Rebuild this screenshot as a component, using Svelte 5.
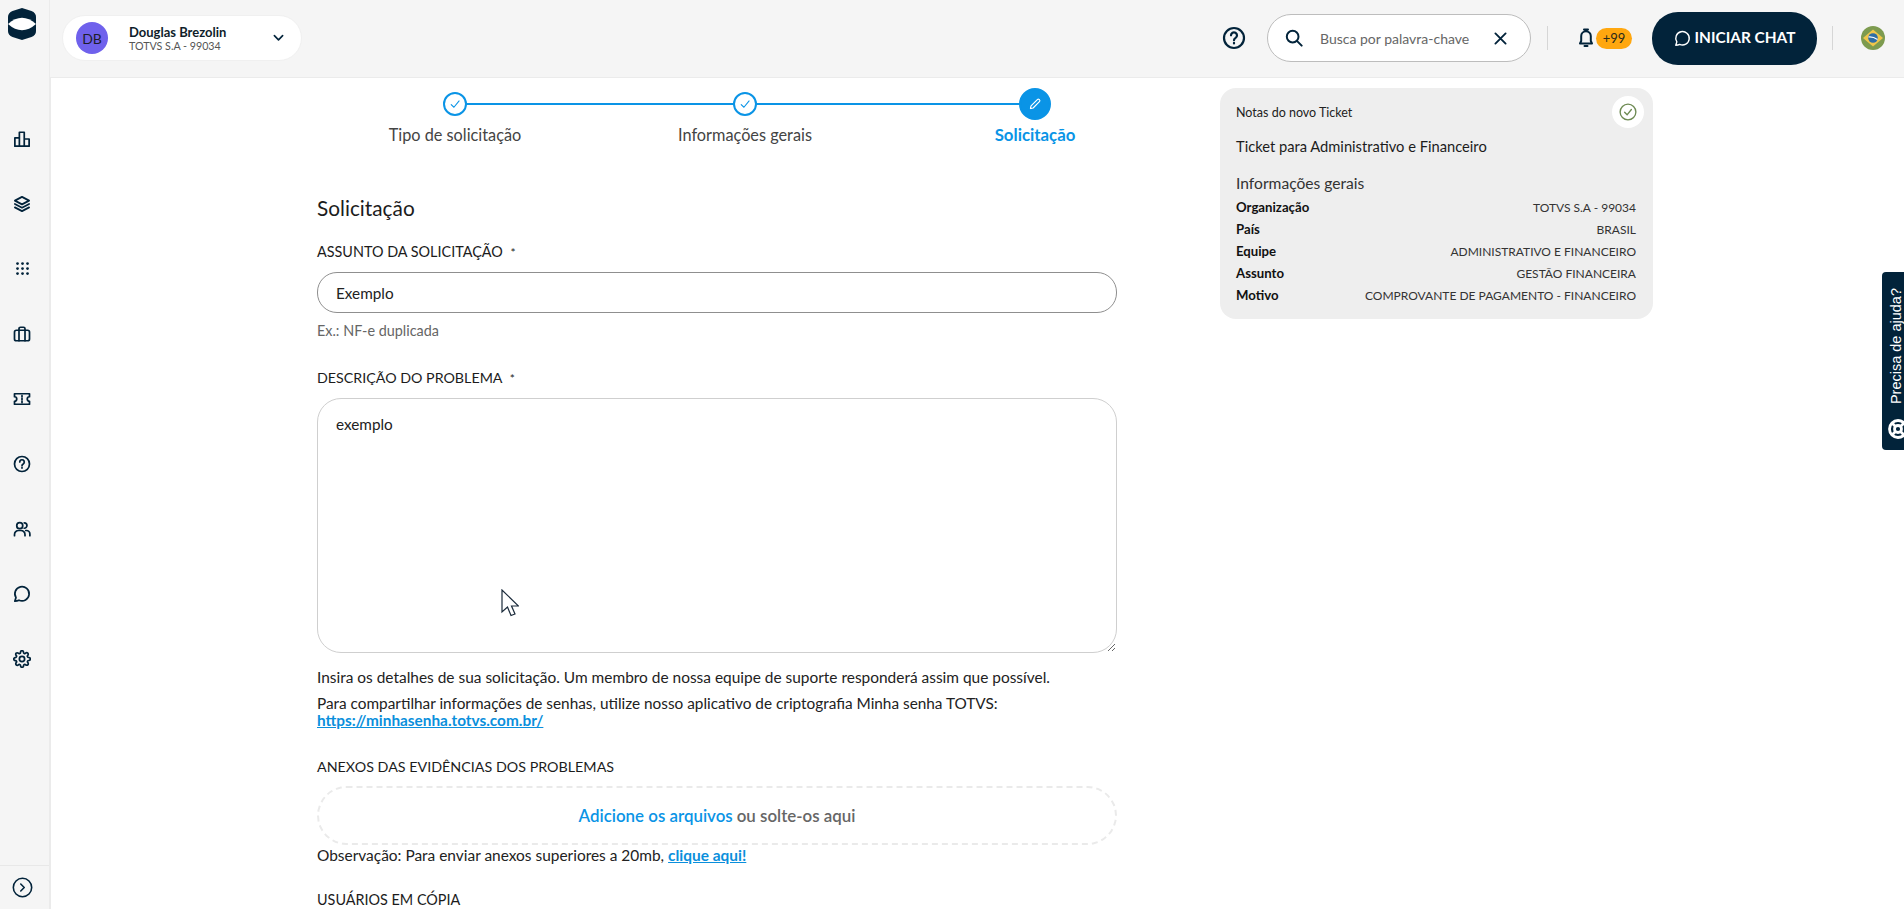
<script>
  const rows = [
    ['Organização', 'TOTVS S.A - 99034'],
    ['País', 'BRASIL'],
    ['Equipe', 'ADMINISTRATIVO E FINANCEIRO'],
    ['Assunto', 'GESTÃO FINANCEIRA'],
    ['Motivo', 'COMPROVANTE DE PAGAMENTO - FINANCEIRO']
  ];
</script>

<div class="shell">
  <aside class="side">
    <svg class="logo" viewBox="0 0 28 32"><path fill="#02233a" d="M14 0 23.5 3Q28 4.8 28 9V23Q28 27.2 23.5 29L14 32 4.500 29Q0 27.200 0 23V9Q0 4.800 4.500 3Z"/><path fill="#fff" d="M0 16Q14 3.500 28 16 14 28.500 0 16Z"/></svg>
    <nav class="nav">
      <div class="nav-item"><svg class="ico" viewBox="0 0 24 24"><path d="M2.500 21.500V10.500H8.500V21.500M8.500 21.500V3H15V21.500M15 21.500V12H21.500V21.500ZM2.500 21.500H21.500"/></svg></div>
      <div class="nav-item"><svg class="ico" viewBox="0 0 24 24"><path d="M12 2.500 21.500 7.500 12 12.500 2.500 7.500ZM2.500 12 12 17 21.500 12M2.500 16.500 12 21.500 21.500 16.500"/></svg></div>
      <div class="nav-item"><svg class="ico dots" viewBox="0 0 24 24"><circle cx="4" cy="4" r="2.200"/><circle cx="12" cy="4" r="2.200"/><circle cx="20" cy="4" r="2.200"/><circle cx="4" cy="12" r="2.200"/><circle cx="12" cy="12" r="2.200"/><circle cx="20" cy="12" r="2.200"/><circle cx="4" cy="20" r="2.200"/><circle cx="12" cy="20" r="2.200"/><circle cx="20" cy="20" r="2.200"/></svg></div>
      <div class="nav-item"><svg class="ico" viewBox="0 0 24 24"><rect x="2" y="7" width="20" height="14" rx="2.500"/><path d="M8 21V5A2 2 0 0 1 10 3H14A2 2 0 0 1 16 5V21"/></svg></div>
      <div class="nav-item"><svg class="ico" viewBox="0 0 24 24"><path d="M2 5H22V9A3 3 0 0 0 22 15V19H2V15A3 3 0 0 0 2 9ZM12 7.500V9M12 11V13M12 15V16.500"/></svg></div>
      <div class="nav-item"><svg class="ico" viewBox="0 0 24 24"><circle cx="12" cy="12" r="10"/><path d="M9 9.300A3 3 0 1 1 13.600 11.900C12.600 12.500 12 13.100 12 14.200M12 16.800V17.400"/></svg></div>
      <div class="nav-item"><svg class="ico" viewBox="0 0 24 24"><circle cx="9" cy="7.500" r="4"/><path d="M15 3.800A3.500 3.500 0 1 1 15 11M2 21V19.500A5.500 5.500 0 0 1 7.500 14H10.500A5.500 5.500 0 0 1 16 19.500V21M17 14H18A4.500 4.500 0 0 1 22.500 18.500V21"/></svg></div>
      <div class="nav-item"><svg class="ico" viewBox="0 0 24 24"><path d="M2.500 21.500 4 16.800A9.500 9.500 0 1 1 8 20.300C6 21.300 4.300 21.500 2.500 21.500Z"/></svg></div>
      <div class="nav-item"><svg class="ico" viewBox="0 0 24 24"><circle cx="12" cy="12" r="3.500"/><path d="M19.400 15a1.650 1.650 0 0 0 .33 1.820l.06.06a2 2 0 0 1 0 2.830 2 2 0 0 1-2.830 0l-.06-.06a1.650 1.650 0 0 0-1.820-.33 1.650 1.650 0 0 0-1 1.510V21a2 2 0 0 1-2 2 2 2 0 0 1-2-2v-.09A1.650 1.650 0 0 0 9 19.400a1.650 1.650 0 0 0-1.820.33l-.06.06a2 2 0 0 1-2.830 0 2 2 0 0 1 0-2.830l.06-.06a1.650 1.650 0 0 0 .33-1.820 1.650 1.650 0 0 0-1.510-1H3a2 2 0 0 1-2-2 2 2 0 0 1 2-2h.09A1.650 1.650 0 0 0 4.600 9a1.650 1.650 0 0 0-.33-1.820l-.06-.06a2 2 0 0 1 0-2.830 2 2 0 0 1 2.830 0l.06.06a1.650 1.650 0 0 0 1.820.33H9a1.650 1.650 0 0 0 1-1.510V3a2 2 0 0 1 2-2 2 2 0 0 1 2 2v.09a1.650 1.650 0 0 0 1 1.510 1.650 1.650 0 0 0 1.820-.33l.06-.06a2 2 0 0 1 2.830 0 2 2 0 0 1 0 2.830l-.06.06a1.650 1.650 0 0 0-.33 1.820V9a1.650 1.650 0 0 0 1.510 1H21a2 2 0 0 1 2 2 2 2 0 0 1-2 2h-.09a1.650 1.650 0 0 0-1.510 1z"/></svg></div>
    </nav>
    <div class="side-foot"><svg class="expand" viewBox="0 0 24 24"><circle cx="12" cy="12" r="10.500"/><path d="M10 8 14 12 10 16"/></svg></div>
  </aside>

  <div class="main">
    <header class="top">
      <div class="user">
        <span class="avatar">DB</span>
        <span class="who"><b>Douglas Brezolin</b><small>TOTVS S.A - 99034</small></span>
        <svg class="caret" viewBox="0 0 12 8"><path d="M1.500 1.500 6 6 10.500 1.500"/></svg>
      </div>
      <div class="actions">
        <svg class="help" viewBox="0 0 24 24"><circle cx="12" cy="12" r="10"/><path d="M9 9.300A3 3 0 1 1 13.600 11.900C12.600 12.500 12 13.100 12 14.200M12 16.800V17.400"/></svg>
        <div class="search">
          <svg class="s-ico" viewBox="0 0 20 20"><circle cx="8.500" cy="8.500" r="6.500"/><path d="M13.500 13.500 18.500 18.500"/></svg>
          <span class="ph">Busca por palavra-chave</span>
          <svg class="s-x" viewBox="0 0 14 14"><path d="M1.500 1.500 12.500 12.500M12.500 1.500 1.500 12.500"/></svg>
        </div>
        <span class="vr first"></span>
        <div class="bell">
          <svg viewBox="0 0 16 20"><path d="M2 15.500H14L12.800 13V8A4.800 4.800 0 0 0 3.200 8V13ZM6 1.500H10M6.500 18H9.500"/></svg>
          <span class="badge">+99</span>
        </div>
        <button class="chat"><svg viewBox="0 0 24 24"><path d="M2.500 21.500 4 16.800A9.500 9.500 0 1 1 8 20.300C6 21.300 4.300 21.500 2.500 21.500Z"/></svg>INICIAR CHAT</button>
        <span class="vr"></span>
        <svg class="flag" viewBox="0 0 24 24"><circle cx="12" cy="12" r="12" fill="#7d9b4f"/><path fill="#f0c64a" d="M12 3.500 22 12 12 20.500 2 12Z"/><circle cx="12" cy="12" r="4.800" fill="#2f6ea6"/><path d="M7.500 11Q12 10.500 16.500 13.500" stroke="#fff" fill="none" stroke-width="1.200"/></svg>
      </div>
    </header>

    <div class="body">
      <section class="form">
        <ol class="steps">
          <li class="step done"><span class="dot"><svg viewBox="0 0 12 12"><path d="M2.500 6.500 5 9 9.800 3.200"/></svg></span>Tipo de solicitação</li>
          <li class="step done"><span class="dot"><svg viewBox="0 0 12 12"><path d="M2.500 6.500 5 9 9.800 3.200"/></svg></span>Informações gerais</li>
          <li class="step now"><span class="dot"><svg viewBox="0 0 12 12"><path d="M2 10 2.600 7.600 8 2.200A1 1 0 0 1 9.800 4L4.400 9.400Z"/></svg></span>Solicitação</li>
        </ol>

        <h2>Solicitação</h2>
        <label class="lab" for="sub">ASSUNTO DA SOLICITAÇÃO <em>*</em></label>
        <input id="sub" class="inp" value="Exemplo" />
        <p class="hint">Ex.: NF-e duplicada</p>

        <label class="lab desc" for="txt">DESCRIÇÃO DO PROBLEMA <em>*</em></label>
        <textarea id="txt" class="area">exemplo</textarea>
        <p class="note n1">Insira os detalhes de sua solicitação. Um membro de nossa equipe de suporte responderá assim que possível.</p>
        <p class="note n2">Para compartilhar informações de senhas, utilize nosso aplicativo de criptografia Minha senha TOTVS:<br /><a href="#top">https://minhasenha.totvs.com.br/</a></p>

        <div class="lab plain att">ANEXOS DAS EVIDÊNCIAS DOS PROBLEMAS</div>
        <div class="drop"><span>Adicione os arquivos</span> ou solte-os aqui</div>
        <p class="note obs">Observação: Para enviar anexos superiores a 20mb, <a href="#top">clique aqui!</a></p>
        <div class="lab plain cc">USUÁRIOS EM CÓPIA</div>
      </section>

      <aside class="card">
        <div class="card-top">
          <span>Notas do novo Ticket</span>
          <span class="ok"><svg viewBox="0 0 16 16"><circle cx="8" cy="8" r="7" /><path d="M5 8.300 7.200 10.500 11 5.800"/></svg></span>
        </div>
        <h3>Ticket para Administrativo e Financeiro</h3>
        <h4>Informações gerais</h4>
        <dl>
          {#each rows as [k, v]}
            <div class="row"><dt>{k}</dt><dd>{v}</dd></div>
          {/each}
        </dl>
      </aside>
    </div>
  </div>

  <div class="tab">
    <svg viewBox="0 0 20 20"><circle cx="10" cy="10" r="8.500"/><circle cx="10" cy="10" r="3.500"/><path d="M4 4 7.500 7.500M16 4 12.500 7.500M4 16 7.500 12.500M16 16 12.500 12.500"/></svg>
    <span>Precisa de ajuda?</span>
  </div>

  <svg class="cursor" viewBox="0 0 18 28"><path d="M1 1V23L6.500 18 10 26.500 14 25 10.500 17H17.500Z"/></svg>
</div>

<style>
  :global(body) {
    margin: 0;
    font-family: Lato, "Noto Sans", sans-serif;
    color: #1c1c1c;
  }
  .shell {
    display: flex;
    height: 909px;
    overflow: hidden;
    background: #f5f5f5;
    position: relative;
  }
  .side {
    width: 50px;
    flex: none;
    box-sizing: border-box;
    border-right: 1px solid #ebebeb;
    display: flex;
    flex-direction: column;
    align-items: center;
    padding-right: 5px;
  }
  .logo {
    width: 28px;
    height: 32px;
    margin-top: 8px;
  }
  .nav {
    margin-top: 66px;
    display: flex;
    flex-direction: column;
    align-items: center;
  }
  .nav-item {
    height: 65.100px;
    display: flex;
    align-items: center;
  }
  .ico {
    width: 18px;
    height: 18px;
    fill: none;
    stroke: #02233a;
    stroke-width: 2.300;
    stroke-linecap: round;
    stroke-linejoin: round;
  }
  .ico.dots {
    fill: #02233a;
    stroke: none;
    width: 15px;
    height: 15px;
  }
  .side-foot {
    margin-top: auto;
    margin-right: -5px;
    padding-right: 5px;
    width: 100%;
    height: 43px;
    box-sizing: content-box;
    border-top: 1px solid #e8e8e8;
    display: flex;
    align-items: center;
    justify-content: center;
  }
  .expand {
    width: 21px;
    height: 21px;
    fill: none;
    stroke: #02233a;
    stroke-width: 1.800;
    stroke-linecap: round;
    stroke-linejoin: round;
  }
  .main {
    flex: 1;
    min-width: 0;
    display: flex;
    flex-direction: column;
  }
  .top {
    height: 78px;
    flex: none;
    box-sizing: border-box;
    border-bottom: 1px solid #ebebeb;
    display: flex;
    align-items: center;
    justify-content: space-between;
    padding: 0 19px 1px 12px;
  }
  .user {
    width: 240px;
    height: 46px;
    box-sizing: border-box;
    background: #fff;
    border: 1px solid #f0f0f0;
    border-radius: 23px;
    display: flex;
    align-items: center;
    padding: 0 17px 0 13px;
  }
  .avatar {
    width: 32px;
    height: 32px;
    border-radius: 50%;
    background: #6f61ec;
    color: #1d1d2b;
    font-size: 14px;
    display: flex;
    align-items: center;
    justify-content: center;
    flex: none;
  }
  .who {
    display: flex;
    flex-direction: column;
    margin-left: 21px;
    flex: 1;
  }
  .who b {
    font-size: 13px;
    line-height: 14px;
    color: #0f1d2a;
  }
  .who small {
    font-size: 10.700px;
    line-height: 13px;
    color: #555;
  }
  .caret {
    width: 11px;
    height: 8px;
    fill: none;
    stroke: #02233a;
    stroke-width: 1.800;
    stroke-linecap: round;
    stroke-linejoin: round;
  }
  .actions {
    display: flex;
    align-items: center;
  }
  .help {
    width: 24px;
    height: 24px;
    fill: none;
    stroke: #02233a;
    stroke-width: 2.200;
    stroke-linecap: round;
  }
  .search {
    width: 264px;
    height: 48px;
    margin-left: 21px;
    box-sizing: border-box;
    background: #fff;
    border: 1px solid #bdbdbd;
    border-radius: 24px;
    display: flex;
    align-items: center;
    padding: 0 23px 0 17px;
  }
  .s-ico {
    width: 18px;
    height: 18px;
    fill: none;
    stroke: #02233a;
    stroke-width: 2.200;
    stroke-linecap: round;
  }
  .ph {
    flex: 1;
    margin-left: 17px;
    font-size: 14px;
    color: #666;
  }
  .s-x {
    width: 13px;
    height: 13px;
    fill: none;
    stroke: #02233a;
    stroke-width: 2;
    stroke-linecap: round;
  }
  .vr {
    width: 1px;
    height: 24px;
    background: #d6d6d6;
    margin: 0 15px;
  }
  .vr.first {
    margin: 0 0 0 16px;
  }
  .bell {
    display: flex;
    align-items: center;
    margin-left: 29px;
    margin-right: 20px;
  }
  .bell svg {
    width: 18px;
    height: 20px;
    fill: none;
    stroke: #02233a;
    stroke-width: 2;
    stroke-linecap: round;
    stroke-linejoin: round;
  }
  .badge {
    width: 36px;
    height: 21px;
    border-radius: 11px;
    background: #ffa70f;
    font-size: 13px;
    line-height: 21px;
    text-align: center;
    color: #2a2a1a;
    margin-left: 1px;
  }
  .chat {
    width: 165px;
    height: 53px;
    border: 0;
    border-radius: 26px;
    background: #02233a;
    color: #fff;
    font: 700 15.400px Lato, sans-serif;
    display: flex;
    align-items: center;
    justify-content: center;
    gap: 4px;
    padding: 0 0 3px;
  }
  .chat svg {
    width: 17px;
    height: 17px;
    fill: none;
    stroke: #fff;
    stroke-width: 2;
    stroke-linejoin: round;
    margin-top: 3px;
  }
  .flag {
    width: 24px;
    height: 24px;
    margin-left: 13px;
  }
  .body {
    flex: 1;
    min-height: 0;
    background: #fff;
    border-left: 1px solid #ebebeb;
    display: flex;
    align-items: flex-start;
    padding-left: 266px;
  }
  .form {
    width: 800px;
    flex: none;
  }
  .steps {
    list-style: none;
    margin: 10px 0 0 -7px;
    padding: 0;
    width: 870px;
    display: grid;
    grid-template-columns: repeat(3, 1fr);
  }
  .step {
    position: relative;
    display: flex;
    flex-direction: column;
    align-items: center;
    font-size: 16.300px;
    color: #444;
    line-height: 20px;
  }
  .step:not(:last-child)::after {
    content: "";
    position: absolute;
    left: 50%;
    width: 100%;
    top: 15px;
    height: 2px;
    background: #0a94e6;
  }
  .dot {
    position: relative;
    z-index: 1;
    height: 32px;
    width: 24px;
    display: flex;
    align-items: center;
    justify-content: center;
    margin-bottom: 5px;
  }
  .dot svg {
    box-sizing: border-box;
    width: 24px;
    height: 24px;
    padding: 3.500px;
    border: 2px solid #0a94e6;
    border-radius: 50%;
    background: #fff;
    fill: none;
    stroke: #0a94e6;
    stroke-width: 1;
    stroke-linecap: round;
    stroke-linejoin: round;
  }
  .now {
    color: #0a94e6;
    font-weight: 700;
    font-size: 16.800px;
  }
  .now .dot {
    width: 32px;
  }
  .now .dot svg {
    width: 32px;
    height: 32px;
    padding: 7px;
    background: #0a94e6;
    stroke: #fff;
  }
  h2 {
    font-size: 20.800px;
    font-weight: 400;
    line-height: 24px;
    margin: 51px 0 0;
    color: #1c1c1c;
  }
  .lab {
    display: block;
    font-size: 14.400px;
    line-height: 18px;
    margin-top: 23px;
    color: #1c1c1c;
    font-weight: 400;
  }
  .lab em {
    font-style: normal;
    margin-left: 4px;
    font-size: 12px;
  }
  .inp {
    display: block;
    width: 100%;
    box-sizing: border-box;
    height: 41px;
    margin-top: 10px;
    border: 1px solid #8f8f8f;
    border-radius: 20px;
    padding: 0 18px;
    font: 15.300px Lato, sans-serif;
    color: #222;
    outline: 0;
  }
  .hint {
    margin: 9px 0 0;
    font-size: 14.400px;
    line-height: 18px;
    color: #666;
  }
  .lab.desc {
    margin-top: 29px;
    font-size: 14.250px;
  }
  .area {
    display: block;
    width: 100%;
    box-sizing: border-box;
    height: 255px;
    margin-top: 10px;
    border: 1px solid #cfcfcf;
    border-radius: 24px;
    padding: 16px 18px;
    font: 15.300px/19px Lato, sans-serif;
    color: #222;
    outline: 0;
  }
  .note {
    margin: 0;
    font-size: 15.450px;
    line-height: 19px;
    color: #222;
  }
  .n1 {
    margin-top: 15px;
  }
  .n2 {
    margin-top: 8px;
    line-height: 17px;
    font-size: 15.350px;
  }
  a {
    color: #0a8fdc;
    font-weight: 700;
    text-decoration: underline;
  }
  .lab.att {
    margin-top: 29px;
    font-size: 14.300px;
  }
  .drop {
    height: 59px;
    box-sizing: border-box;
    margin-top: 10px;
    border: 2px dashed #eaeaea;
    border-radius: 30px;
    display: flex;
    align-items: center;
    justify-content: center;
    gap: 4px;
    font-size: 16.900px;
    font-weight: 600;
    color: #666;
  }
  .drop span {
    color: #0a94e6;
  }
  .obs {
    margin-top: 1px;
  }
  .lab.cc {
    margin-top: 26px;
  }
  .card {
    width: 433px;
    height: 231px;
    flex: none;
    box-sizing: border-box;
    margin: 10px 0 0 103px;
    padding: 8px 17px 0 16px;
    background: #eee;
    border-radius: 16px;
  }
  .card-top {
    display: flex;
    justify-content: space-between;
    align-items: center;
    font-size: 12.500px;
    color: #222;
    margin-right: -8px;
  }
  .ok {
    width: 32px;
    height: 32px;
    border-radius: 50%;
    background: #fff;
    display: flex;
    align-items: center;
    justify-content: center;
  }
  .ok svg {
    width: 18px;
    height: 18px;
    fill: none;
    stroke: #6d8a52;
    stroke-width: 1.200;
    stroke-linecap: round;
  }
  h3 {
    font-size: 14.700px;
    font-weight: 400;
    line-height: 20px;
    margin: 8px 0 0;
    color: #1c1c1c;
  }
  h4 {
    font-size: 15.600px;
    font-weight: 400;
    line-height: 20px;
    margin: 17px 0 0;
    color: #333;
  }
  dl {
    margin: 3px 0 0;
  }
  .row {
    display: flex;
    justify-content: space-between;
    height: 22px;
    align-items: center;
    font-size: 13.200px;
  }
  dt {
    font-weight: 700;
    color: #111;
  }
  dd {
    margin: 0;
    color: #333;
    font-size: 12px;
  }
  .tab {
    position: absolute;
    right: 0;
    top: 272px;
    width: 22px;
    height: 178px;
    background: #02233a;
    border-radius: 4px 0 0 4px;
    display: flex;
    flex-direction: column-reverse;
    align-items: center;
    justify-content: flex-start;
    gap: 15px;
    padding-bottom: 11px;
    box-sizing: border-box;
    color: #fff;
    overflow: hidden;
  }
  .tab span {
    writing-mode: vertical-rl;
    transform: rotate(180deg);
    font: 14.500px/16px "Liberation Sans", sans-serif;
    white-space: nowrap;
    align-self: flex-end;
  }
  .tab svg {
    width: 20px;
    height: 20px;
    flex: none;
    margin-left: 10px;
    fill: none;
    stroke: #fff;
    stroke-width: 2.800;
  }
  .cursor {
    position: absolute;
    left: 501px;
    top: 589px;
    width: 18px;
    height: 28px;
    fill: #fff;
    stroke: #1a2a3a;
    stroke-width: 1.200;
  }
</style>
